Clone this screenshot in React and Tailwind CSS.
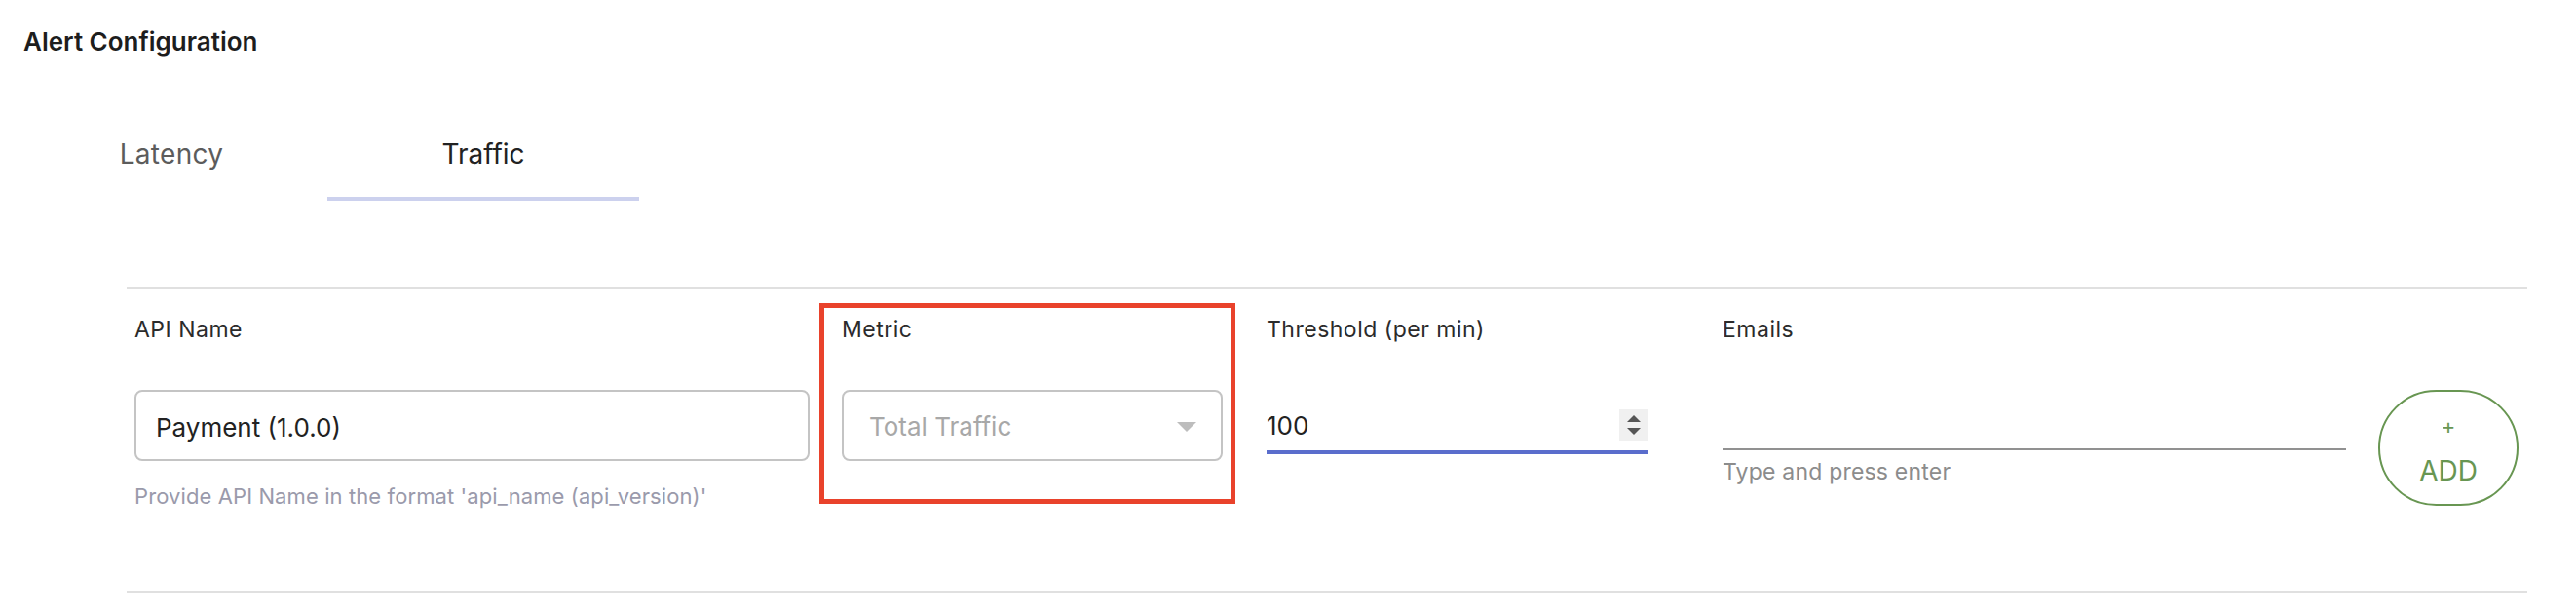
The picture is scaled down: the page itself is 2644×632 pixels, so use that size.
export default function App() {
  return (
    <div className="w-full min-h-[632px] bg-white font-['Inter',sans-serif] flex flex-col pt-[27px]">
      <div className="pl-[24px] text-[26px] leading-[32px] font-semibold text-[#1d1d1d]">
        Alert Configuration
      </div>

      <div className="mt-[55px] ml-[16px] flex">
        <div className="w-[320px] h-[92px] border-b-4 border-transparent flex items-center justify-center text-[28px] leading-[32px] tracking-[0.3px] text-[#5c5c5c]">
          Latency
        </div>
        <div className="w-[320px] h-[92px] border-b-4 border-[#ccd1ee] flex items-center justify-center text-[28px] leading-[32px] text-[#222222]">
          Traffic
        </div>
      </div>

      <div className="mt-[88px] ml-[130px] w-[2464px] h-[314px] border-y-2 border-[#e0e0e0] pt-[28px] pl-[8px] flex items-start">
        {/* API Name */}
        <div className="w-[693px] flex flex-col">
          <div className="text-[23px] leading-[28px] tracking-[0.5px] text-[#2b2b2b]">API Name</div>
          <div className="mt-[48px] h-[73px] border-2 border-[#c4c4c4] rounded-[8px] flex items-center pl-[20px] pt-[4px] text-[26px] leading-[32px] text-[#222222]">
            Payment (1.0.0)
          </div>
          <div className="mt-[22px] text-[22px] leading-[28px] tracking-[0.1px] text-[#9a9aab]">
            Provide API Name in the format 'api_name (api_version)'
          </div>
        </div>

        {/* Metric */}
        <div className="ml-[33px] w-[391px] relative flex flex-col">
          <div className="absolute left-[-23px] top-[-13px] w-[427px] h-[206px] border-[5px] border-[#e9422b]"></div>
          <div className="text-[23px] leading-[28px] tracking-[0.5px] text-[#2b2b2b]">Metric</div>
          <div className="mt-[48px] h-[73px] border-2 border-[#c4c4c4] rounded-[8px] flex items-center justify-between pl-[26px] pr-[25px] pt-[2px] text-[26px] leading-[32px] text-[#a8a8a8]">
            <span>Total Traffic</span>
            <svg width="20" height="10" viewBox="0 0 20 10">
              <path d="M0 0 L20 0 L10 10 Z" fill="#bdbdbd" />
            </svg>
          </div>
        </div>

        {/* Threshold */}
        <div className="ml-[45px] w-[392px] flex flex-col">
          <div className="text-[23px] leading-[28px] tracking-[0.5px] text-[#2b2b2b]">Threshold (per min)</div>
          <div className="mt-[48px] h-[66px] border-b-4 border-[#5a6dcc] flex items-end justify-between pb-[9px]">
            <span className="text-[26px] leading-[32px] text-[#222222]">100</span>
            <div className="w-[30px] h-[32px] mb-[1px] bg-[#f0f0f0] flex flex-col items-center justify-center gap-[6px]">
              <svg width="14" height="7" viewBox="0 0 14 7">
                <path d="M0 7 L14 7 L7 0 Z" fill="#555555" />
              </svg>
              <svg width="14" height="7" viewBox="0 0 14 7">
                <path d="M0 0 L14 0 L7 7 Z" fill="#555555" />
              </svg>
            </div>
          </div>
        </div>

        {/* Emails */}
        <div className="ml-[76px] w-[640px] flex flex-col">
          <div className="text-[23px] leading-[28px] tracking-[0.5px] text-[#2b2b2b]">Emails</div>
          <div className="mt-[48px] h-[62px] border-b-2 border-[#919191]"></div>
          <div className="mt-[8px] text-[23px] leading-[28px] tracking-[0.2px] text-[#8c8c8c]">Type and press enter</div>
        </div>

        {/* Add */}
        <div className="ml-[33px] mt-[76px] w-[144px] h-[119px] rounded-full border-2 border-[#689652] flex flex-col items-center justify-center gap-[18px] pt-[4px] text-[#689652]">
          <span className="text-[22px] leading-[24px]">+</span>
          <span className="text-[28px] leading-[32px]">ADD</span>
        </div>
      </div>
    </div>
  );
}
